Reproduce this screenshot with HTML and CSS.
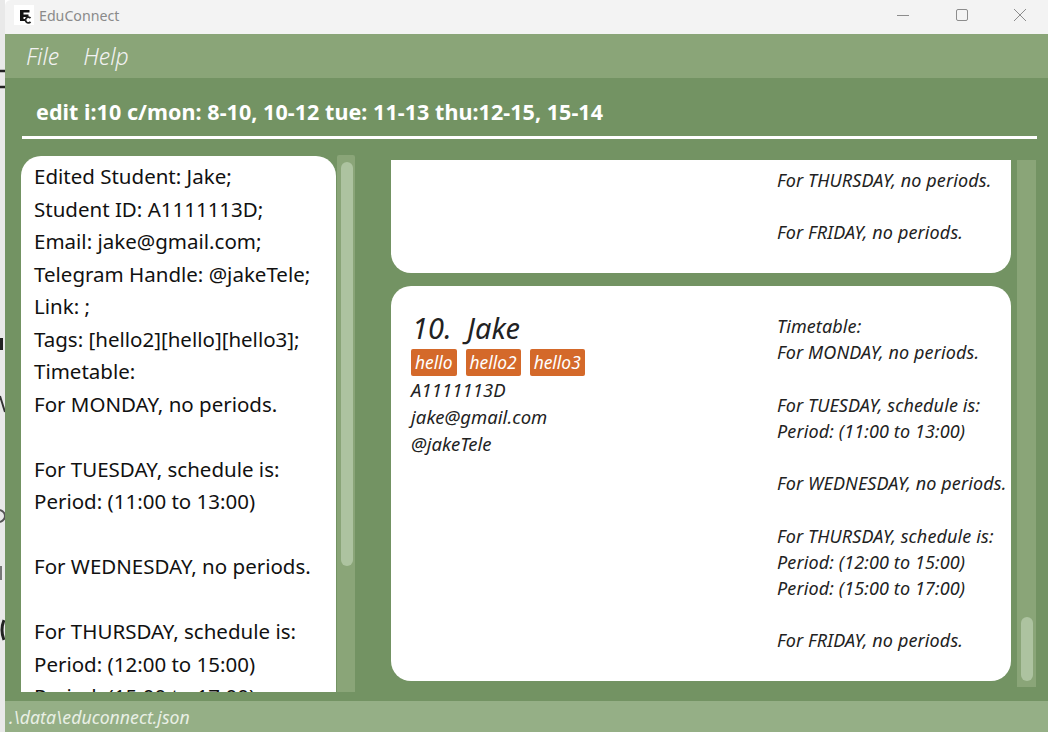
FILE: index.html
```html
<!DOCTYPE html>
<html lang="en">
<head>
<meta charset="utf-8">
<title>EduConnect</title>
<link rel="stylesheet" href="styles.css">
</head>
<body>
<div class="screen">
  <div class="desktop-strip">
    <svg class="desktop-bits" width="5" height="732" viewBox="0 0 5 732">
      <path d="M0 71H5M0 87H5" stroke="#222" stroke-width="2.5"/>
      <path d="M0 338H3V350H0Z" fill="#222"/>
      <path d="M0 396L5 412" stroke="#333" stroke-width="2"/>
      <path d="M0 510Q5 512 5 516T0 522" stroke="#555" stroke-width="2" fill="none"/>
      <path d="M0 566H2V580H0Z" fill="#777"/>
      <path d="M4 620Q0 630 4 640" stroke="#222" stroke-width="3" fill="none"/>
    </svg>
  </div>
  <div class="window">
    <header class="titlebar">
      <div class="app-icon">
        <svg width="20" height="20" viewBox="0 0 20 20">
          <path d="M6 5H15.5V7.5H9.5V9.5H14.5V12H9.5V14H11V16H6Z" fill="#111"/>
          <path d="M16.5 13.2A2.8 2.8 0 1 0 16.5 16.8" stroke="#222" stroke-width="1.8" fill="none"/>
        </svg>
      </div>
      <span class="app-name">EduConnect</span>
      <div class="controls">
        <svg class="control" width="14" height="14" viewBox="0 0 14 14"><path d="M1 7.5H13" stroke="#8c8c8c"/></svg>
        <svg class="control" width="14" height="14" viewBox="0 0 14 14"><rect x="1.5" y="1.5" width="11" height="11" rx="1.5" fill="none" stroke="#8c8c8c"/></svg>
        <svg class="control" width="14" height="14" viewBox="0 0 14 14"><path d="M1 1L13 13M13 1L1 13" stroke="#8c8c8c"/></svg>
      </div>
    </header>
    <nav class="menubar">
      <span class="menu-item">File</span>
      <span class="menu-item">Help</span>
    </nav>
    <main class="main">
      <div class="command">edit i:10 c/mon: 8-10, 10-12 tue: 11-13 thu:12-15, 15-14</div>
      <div class="panels">
        <section class="result-pane">
          <div class="result-box">
            <div class="result-text">Edited Student: Jake;<br>Student ID: A1111113D;<br>Email: jake@gmail.com;<br>Telegram Handle: @jakeTele;<br>Link: ;<br>Tags: [hello2][hello][hello3];<br>Timetable:<br>For MONDAY, no periods.<br><br>For TUESDAY, schedule is:<br>Period: (11:00 to 13:00)<br><br>For WEDNESDAY, no periods.<br><br>For THURSDAY, schedule is:<br>Period: (12:00 to 15:00)<br>Period: (15:00 to 17:00)</div>
          </div>
          <div class="scroll-track result-track"><div class="scroll-thumb result-thumb"></div></div>
        </section>
        <section class="list-pane">
          <div class="list">
            <article class="card card-clipped">
              <div class="timetable">For THURSDAY, no periods.<br><br>For FRIDAY, no periods.</div>
            </article>
            <article class="card card-full">
              <div class="person">
                <div class="person-name">10.&nbsp; Jake</div>
                <div class="tags">
                  <span class="tag">hello</span>
                  <span class="tag">hello2</span>
                  <span class="tag">hello3</span>
                </div>
                <div class="detail">A1111113D</div>
                <div class="detail">jake@gmail.com</div>
                <div class="detail">@jakeTele</div>
              </div>
              <div class="timetable">Timetable:<br>For MONDAY, no periods.<br><br>For TUESDAY, schedule is:<br>Period: (11:00 to 13:00)<br><br>For WEDNESDAY, no periods.<br><br>For THURSDAY, schedule is:<br>Period: (12:00 to 15:00)<br>Period: (15:00 to 17:00)<br><br>For FRIDAY, no periods.</div>
            </article>
          </div>
          <div class="scroll-track list-track"><div class="scroll-thumb list-thumb"></div></div>
        </section>
      </div>
    </main>
    <footer class="status">.\data\educonnect.json</footer>
  </div>
</div>
</body>
</html>
```
FILE: styles.css
```css
* { box-sizing: border-box; }
html, body { margin: 0; height: 100%; overflow: hidden; }
body { font-family: "Noto Sans", "Open Sans", sans-serif; }
.screen { display: flex; width: 1048px; height: 732px; overflow: hidden; }
.desktop-strip { width: 5px; flex: none; background: #e9e9e9; }
.desktop-bits { display: block; }
.window { flex: 1; min-width: 0; display: flex; flex-direction: column; }

.titlebar { height: 34px; flex: none; display: flex; align-items: center; background: #f3f3f3; padding-left: 9px; border-top-left-radius: 6px; }
.app-icon { width: 20px; height: 20px; background: #fff; margin-top: -4px; }
.app-icon svg { display: block; }
.app-name { margin-left: 5px; font-size: 14.2px; color: #8a8a8a; margin-top: -4px; }
.controls { margin-left: auto; display: flex; gap: 44.5px; padding-right: 21px; margin-top: -4px; }
.control { display: block; }

.menubar { height: 44px; flex: none; background: #8aa578; display: flex; align-items: center; gap: 24px; padding-left: 21px; }
.menu-item { font-size: 23px; font-style: italic; font-weight: 300; color: #f2f2f2; }

.main { flex: 1; min-height: 0; background: #739363; display: flex; flex-direction: column; }
.command { height: 61px; flex: none; margin: 0 11px 0 17px; padding: 19px 0 0 14px; border-bottom: 3px solid #fff; font-size: 21.5px; line-height: 29px; font-weight: 700; color: #fff; letter-spacing: 0.05px; white-space: nowrap; }

.panels { flex: 1; min-height: 0; display: flex; }
.result-pane { width: 351px; flex: none; display: flex; padding: 17px 0 9px 16px; }
.result-box { width: 315px; flex: none; background: #fff; border-radius: 20px 20px 0 0; padding: 4px 0 0 13px; overflow: hidden; }
.result-text { font-size: 20.5px; line-height: 32.5px; color: #111; white-space: nowrap; }
.scroll-track { width: 19px; flex: none; background: #8aa578; }
.result-track { width: 18px; margin-left: 1px; padding: 7px 2px 0 4px; border-radius: 2px 2px 0 0; margin-top: -1px; }
.scroll-thumb { background: #adc3a0; border-radius: 6px; }
.result-thumb { height: 404px; }

.list-pane { flex: 1; min-width: 0; display: flex; padding: 21px 12px 14px 35px; }
.list { width: 620px; flex: none; margin-right: 6px; display: flex; flex-direction: column; gap: 13px; }
.card { background: #fff; display: flex; justify-content: flex-end; }
.card-clipped { height: 113px; border-radius: 0 0 20px 20px; padding-top: 7px; }
.card-full { height: 395px; border-radius: 20px; padding: 27px 0 0 20px; justify-content: space-between; }
.timetable { width: 234px; flex: none; font-size: 18px; line-height: 26.2px; font-style: italic; color: #222; letter-spacing: 0.12px; white-space: nowrap; }
.person-name { font-size: 29px; font-style: italic; color: #222; line-height: 32px; padding-left: 1px; margin-top: -1px; letter-spacing: 0.1px; }
.tags { display: flex; gap: 9px; margin-top: 5px; }
.tag { height: 27px; padding: 0 4px; background: #d4692a; border-radius: 2px; color: #fff; font-size: 17.4px; line-height: 26px; font-style: italic; }
.detail { font-size: 18.5px; line-height: 27px; font-style: italic; color: #222; letter-spacing: 0.05px; }
.list-track { height: 527px; padding: 457px 3px 0 4px; }
.list-thumb { height: 64px; }

.status { height: 31px; flex: none; background: #95af86; color: #e9efe5; font-size: 17.7px; font-style: italic; padding: 4px 0 0 4px; }
```
